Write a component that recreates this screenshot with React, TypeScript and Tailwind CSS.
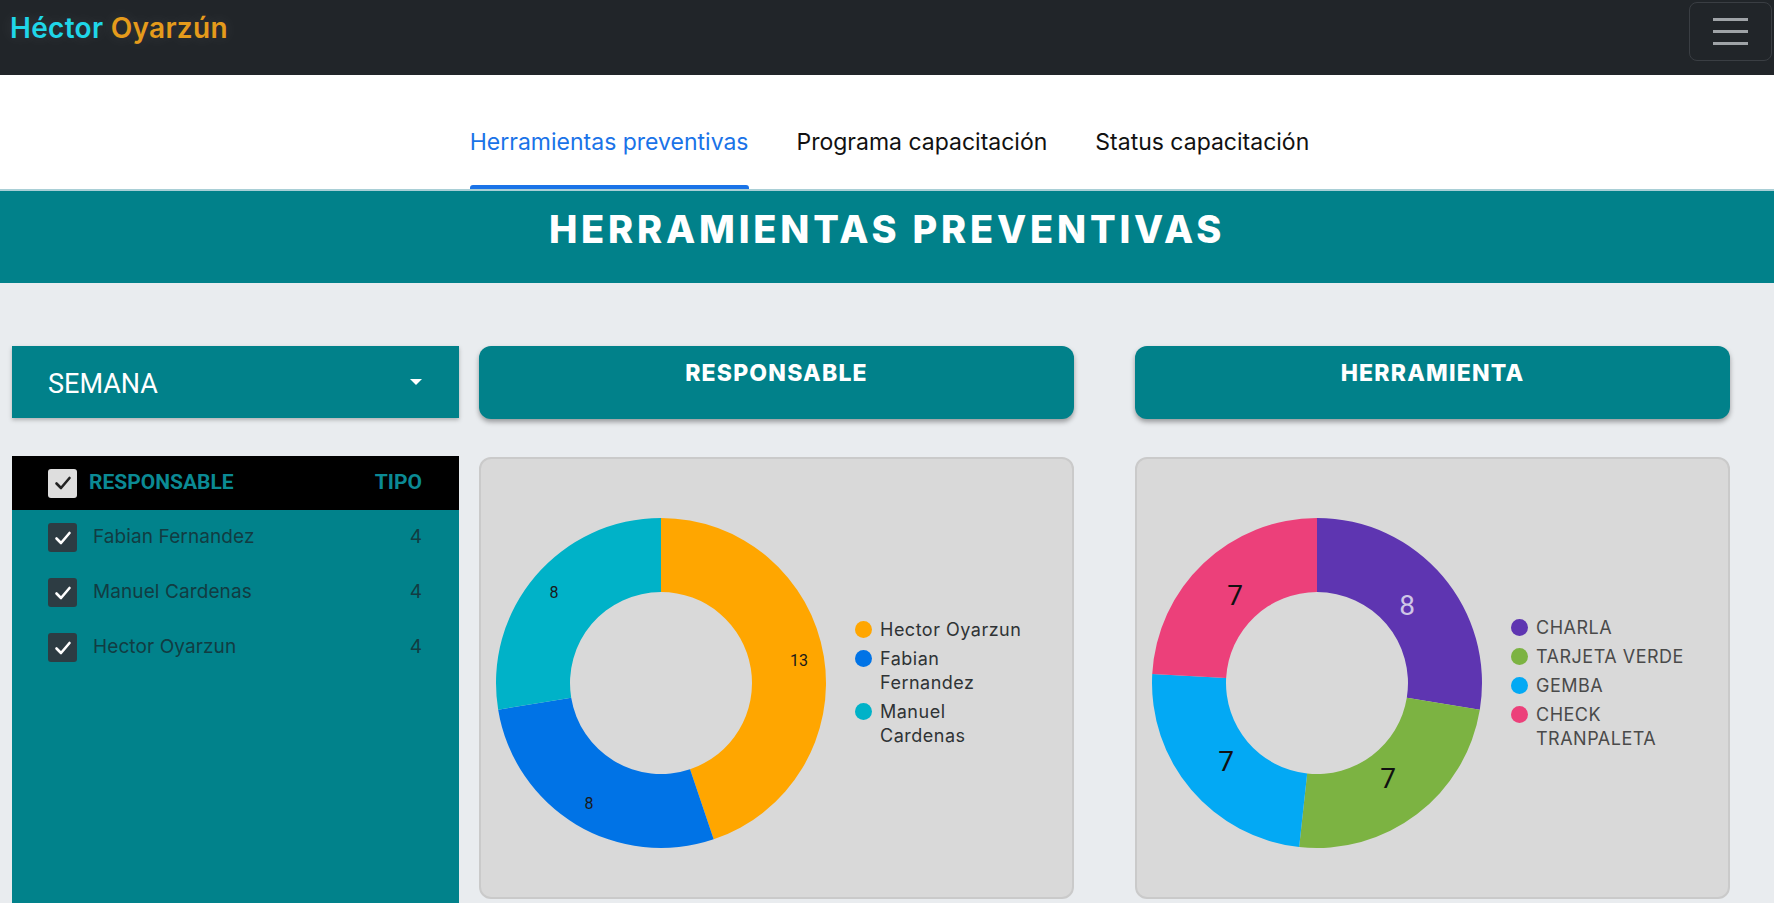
import React from 'react';

type Slice = { value: number; color: string };
type DataLabel = { text: string; dx: number; dy: number; size: number; color: string };
type LegendItem = { lines: string[]; color: string };

const polar = (cx: number, cy: number, r: number, deg: number) => {
  const a = ((deg - 90) * Math.PI) / 180;
  return [cx + r * Math.cos(a), cy + r * Math.sin(a)];
};

const ringPath = (cx: number, cy: number, ro: number, ri: number, a0: number, a1: number) => {
  const large = a1 - a0 > 180 ? 1 : 0;
  const [x0, y0] = polar(cx, cy, ro, a0);
  const [x1, y1] = polar(cx, cy, ro, a1);
  const [x2, y2] = polar(cx, cy, ri, a1);
  const [x3, y3] = polar(cx, cy, ri, a0);
  return `M${x0} ${y0} A${ro} ${ro} 0 ${large} 1 ${x1} ${y1} L${x2} ${y2} A${ri} ${ri} 0 ${large} 0 ${x3} ${y3} Z`;
};

function Donut({ slices, labels }: { slices: Slice[]; labels: DataLabel[] }) {
  const total = slices.reduce((s, d) => s + d.value, 0);
  let start = 0;
  return (
    <svg width="332" height="332" viewBox="0 0 332 332" className="block shrink-0">
      {slices.map((s, i) => {
        const end = start + (s.value / total) * 360;
        const d = ringPath(166, 166, 165, 91, start, end);
        start = end;
        return <path key={i} d={d} fill={s.color} />;
      })}
      {labels.map((l, i) => (
        <text
          key={i}
          x={166 + l.dx}
          y={166 + l.dy}
          fontSize={l.size}
          fill={l.color}
          textAnchor="middle"
          dominantBaseline="central"
          fontFamily="Roboto, sans-serif"
        >
          {l.text}
        </text>
      ))}
    </svg>
  );
}

function Legend({ items, textColor }: { items: LegendItem[]; textColor: string }) {
  return (
    <div className="flex flex-col gap-[5px] ml-[28px]">
      {items.map((it, i) => (
        <div key={i} className="flex items-start gap-[8px]">
          <span className="block w-[17px] h-[17px] rounded-full mt-[3px] shrink-0" style={{ backgroundColor: it.color }} />
          <div className="text-[18px] leading-[24px] tracking-[0.5px]" style={{ color: textColor }}>
            {it.lines.map((ln, j) => (
              <div key={j}>{ln}</div>
            ))}
          </div>
        </div>
      ))}
    </div>
  );
}

function ChartColumn({
  title,
  slices,
  labels,
  legend,
  legendColor,
  className,
}: {
  title: string;
  slices: Slice[];
  labels: DataLabel[];
  legend: LegendItem[];
  legendColor: string;
  className: string;
}) {
  return (
    <div className={`w-[595px] flex flex-col ${className}`}>
      <div className="h-[73px] rounded-[12px] bg-[#01818a] shadow-[0_3px_5px_rgba(0,0,0,0.35)] pt-[13px] text-center text-white font-extrabold text-[23px] leading-[28px] tracking-[1.2px]">
        {title}
      </div>
      <div className="mt-[38px] h-[442px] rounded-[12px] bg-[#d9d9d9] border-2 border-[#cacaca]">
        <div className="flex items-center mt-[58px] ml-[14px]">
          <Donut slices={slices} labels={labels} />
          <Legend items={legend} textColor={legendColor} />
        </div>
      </div>
    </div>
  );
}

function Check({ color }: { color: string }) {
  return (
    <svg width="20" height="20" viewBox="0 0 20 20">
      <polyline points="3.5,10.5 8,15 16.5,5" fill="none" stroke={color} strokeWidth="2.6" strokeLinecap="round" strokeLinejoin="round" />
    </svg>
  );
}

const people = ['Fabian Fernandez', 'Manuel Cardenas', 'Hector Oyarzun'];

export default function App() {
  return (
    <div className="h-[903px] overflow-hidden bg-[#e9ecef] [font-family:Inter,sans-serif]">
      <nav className="h-[75px] bg-[#212529] flex items-start justify-between">
        <a className="pl-[10px] pt-[14px] text-[28px] leading-[28px] font-semibold tracking-[0.3px] [text-shadow:0_0_16px_rgba(255,255,255,0.12)]">
          <span className="text-[#1fd6e8]">Héctor</span> <span className="text-[#e59b1b]">Oyarzún</span>
        </a>
        <button className="mt-[2px] mr-[2px] w-[83px] h-[59px] rounded-[8px] border border-[#3a3e43] flex flex-col items-center justify-center gap-[9px]">
          <span className="block w-[35px] h-[3px] bg-[#9fa3a7]" />
          <span className="block w-[35px] h-[3px] bg-[#9fa3a7]" />
          <span className="block w-[35px] h-[3px] bg-[#9fa3a7]" />
        </button>
      </nav>

      <div className="h-[116px] bg-white border-b-2 border-[#a9cfd6] flex justify-center items-end gap-[48px] pl-[5px]">
        {['Herramientas preventivas', 'Programa capacitación', 'Status capacitación'].map((t, i) => (
          <div key={t} className="flex flex-col">
            <span className={`text-[23px] leading-[28px] whitespace-nowrap ${i === 0 ? 'text-[#1a73e8]' : 'text-[#111]'}`}>{t}</span>
            <span className={`mt-[29px] h-[4px] rounded-t-[3px] ${i === 0 ? 'bg-[#1a73e8]' : 'bg-transparent'}`} />
          </div>
        ))}
      </div>

      <div className="h-[92px] bg-[#01818a] pt-[20px] text-center">
        <h1 className="text-white text-[38px] leading-[37px] font-extrabold tracking-[3.8px]">HERRAMIENTAS PREVENTIVAS</h1>
      </div>

      <div className="flex items-start pt-[63px] pl-[12px]">
        <div className="w-[447px] flex flex-col">
          <div className="h-[72px] bg-[#01818a] shadow-[0_2px_4px_rgba(0,0,0,0.25)] flex items-center justify-between pl-[36px] pr-[37px]">
            <span className="text-white text-[27px] pt-[4px] [font-family:Roboto,sans-serif]">SEMANA</span>
            <span className="block w-0 h-0 border-l-[6px] border-r-[6px] border-t-[6px] border-l-transparent border-r-transparent border-t-white" />
          </div>

          <div className="mt-[38px]">
            <div className="h-[54px] bg-black flex items-center pl-[36px] pr-[37px] [font-family:Roboto,sans-serif]">
              <span className="w-[29px] h-[29px] rounded-[3px] bg-[#dedede] flex items-center justify-center">
                <Check color="#222" />
              </span>
              <span className="ml-[12px] text-[21px] font-bold text-[#0b8a94]">RESPONSABLE</span>
              <span className="ml-auto text-[21px] font-bold text-[#0b8a94]">TIPO</span>
            </div>
            <div className="h-[420px] bg-[#01828b]">
              {people.map((p) => (
                <div key={p} className="h-[55px] flex items-center pl-[36px] pr-[37px]">
                  <span className="w-[29px] h-[29px] rounded-[3px] bg-[#2d3c43] flex items-center justify-center">
                    <Check color="#fff" />
                  </span>
                  <span className="ml-[16px] text-[19px] tracking-[0.1px] text-[#123c42]">{p}</span>
                  <span className="ml-auto text-[19px] text-[#123c42]">4</span>
                </div>
              ))}
            </div>
          </div>
        </div>

        <ChartColumn
          className="ml-[20px]"
          title="RESPONSABLE"
          slices={[
            { value: 13, color: '#ffa600' },
            { value: 8, color: '#0073e6' },
            { value: 8, color: '#00b2c8' },
          ]}
          labels={[
            { text: '13', dx: 138, dy: -23, size: 16, color: '#1a1a1a' },
            { text: '8', dx: -107, dy: -91, size: 16, color: '#1a1a1a' },
            { text: '8', dx: -72, dy: 120, size: 16, color: '#1a1a1a' },
          ]}
          legend={[
            { lines: ['Hector Oyarzun'], color: '#ffa600' },
            { lines: ['Fabian', 'Fernandez'], color: '#0073e6' },
            { lines: ['Manuel', 'Cardenas'], color: '#00b2c8' },
          ]}
          legendColor="#2f3335"
        />

        <ChartColumn
          className="ml-[61px]"
          title="HERRAMIENTA"
          slices={[
            { value: 8, color: '#5e35b1' },
            { value: 7, color: '#7cb342' },
            { value: 7, color: '#03a9f4' },
            { value: 7, color: '#ec407a' },
          ]}
          labels={[
            { text: '8', dx: 90, dy: -78, size: 28, color: '#cfc6e6' },
            { text: '7', dx: 71, dy: 95, size: 28, color: '#111' },
            { text: '7', dx: -91, dy: 78, size: 28, color: '#111' },
            { text: '7', dx: -82, dy: -88, size: 28, color: '#111' },
          ]}
          legend={[
            { lines: ['CHARLA'], color: '#5e35b1' },
            { lines: ['TARJETA VERDE'], color: '#7cb342' },
            { lines: ['GEMBA'], color: '#03a9f4' },
            { lines: ['CHECK', 'TRANPALETA'], color: '#ec407a' },
          ]}
          legendColor="#4a4a4a"
        />
      </div>
    </div>
  );
}
